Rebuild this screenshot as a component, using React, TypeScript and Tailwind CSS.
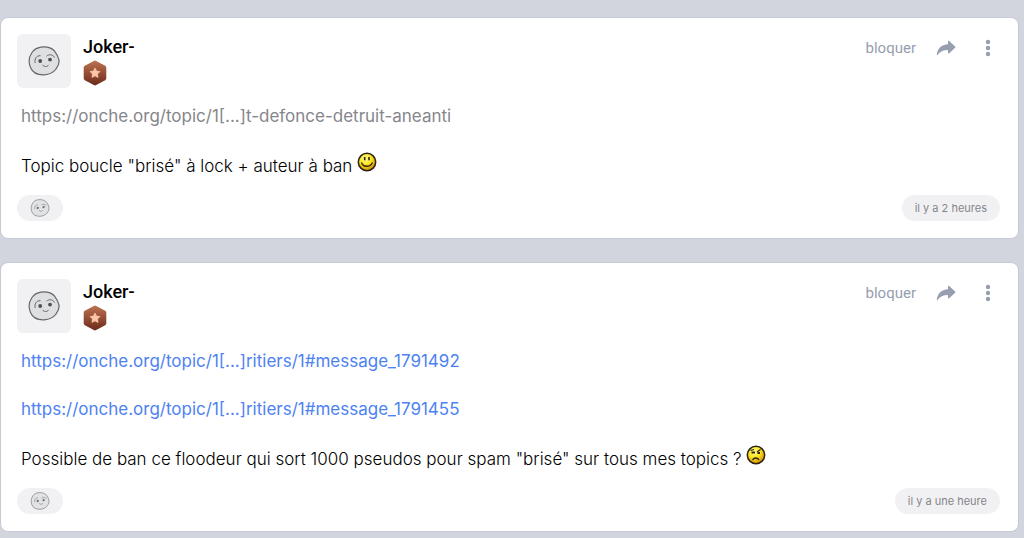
import type { ReactNode } from "react";

const Face = ({ className }: { className?: string }) => (
  <svg viewBox="0 0 32 30" className={className} fill="none" aria-hidden="true">
    <path
      d="M13 1.200C18 .5 23 1.500 26.500 5c1.500 2 3.500 4.500 4.300 8.500.8 3.500-.3 6.500-2.800 9.500-2.500 3.500-7 5.600-12 5.800C9.500 29 4.500 26.500 2.500 21.500.6 17 .8 11 4 6.500 6.200 3.300 9 1.800 13 1.200Z"
      fill="#dedfe0"
      stroke="#66676a"
      strokeWidth="1.200"
    />
    <path d="M7.200 17c-.9-4 1-7.500 5.300-7.300M18.500 10.200c2.300-2 6-2.200 8 1.300" stroke="#66676a" strokeWidth="1" />
    <path d="M14.500 18.800c1.800 2.300 4.500 2.300 6.300 0" stroke="#66676a" strokeWidth="1" />
    <circle cx="12.200" cy="15" r="1.900" fill="#4d4e51" />
    <circle cx="22" cy="13.600" r="1.900" fill="#4d4e51" />
  </svg>
);

const Medal = () => (
  <svg viewBox="0 0 24 26" className="h-[26px] w-6" role="img" aria-label="Bronze">
    <defs>
      <linearGradient id="bronze" x1="0" y1="0" x2="0" y2="1">
        <stop offset="0" stopColor="#bd7350" />
        <stop offset="1" stopColor="#6b2a1b" />
      </linearGradient>
    </defs>
    <path
      d="M10.800.9a2.400 2.400 0 0 1 2.400 0l9 4.900a2.200 2.200 0 0 1 1.100 1.900v10.600a2.200 2.200 0 0 1-1.100 1.900l-9 4.900a2.400 2.400 0 0 1-2.400 0l-9-4.900a2.200 2.200 0 0 1-1.100-1.900V7.700a2.200 2.200 0 0 1 1.100-1.900Z"
      fill="url(#bronze)"
    />
    <path
      d="m12 8 1.500 3.100 3.400.5-2.400 2.400.5 3.400-3-1.600-3 1.600.5-3.400-2.400-2.400 3.400-.5Z"
      fill="#fdc5a6"
      stroke="#fdc5a6"
      strokeWidth="0.800"
      strokeLinejoin="round"
    />
  </svg>
);

const Smiley = ({ sad = false }: { sad?: boolean }) => (
  <svg
    viewBox="0 0 20 20"
    className="inline-block size-5 align-baseline"
    role="img"
    aria-label={sad ? "Doute" : "Sourire"}
  >
    <defs>
      <radialGradient id="smiley" cx="0.4" cy="0.3" r="0.7">
        <stop offset="0" stopColor="#fffa8c" />
        <stop offset="0.500" stopColor="#fbe51e" />
        <stop offset="1" stopColor="#d78c0c" />
      </radialGradient>
    </defs>
    <circle cx="10" cy="10" r="8.700" fill="url(#smiley)" stroke="#2b2412" strokeWidth="1.500" />
    {sad ? (
      <g fill="none" stroke="#2b2412" strokeWidth="1.300">
        <path d="M4.500 5.500 8 4.500M11 7 14.500 4.500" />
        <path d="M6.500 15c1.500-2.700 5-2.700 6.500 0" />
        <path d="M5.500 7.500h3.500M11.500 8h2.500" strokeWidth="2" />
      </g>
    ) : (
      <g fill="none" stroke="#2b2412" strokeWidth="1.300">
        <path d="M4.500 10.500c1.500 5 9 5 11 0" />
        <path d="M7.700 5v3.200M12 5v3.200" strokeWidth="1.600" />
      </g>
    )}
  </svg>
);

const ShareIcon = () => (
  <svg viewBox="0 0 20 16" className="h-4 w-5" fill="#979eb0" aria-hidden="true">
    <path d="M12 1.500c0-.8.7-1 1.200-.5l5.900 5.500c.5.400.5.900 0 1.300l-5.900 5.400c-.5.500-1.200.3-1.200-.5V10C7 10 4 11.500 1.500 14.900c-.3.400-.8.300-.7-.3C1.500 8.500 5.500 4.500 12 4.200Z" />
  </svg>
);

const MenuIcon = () => (
  <svg viewBox="0 0 6 18" className="h-[18px] w-1.5" fill="#979eb0" aria-hidden="true">
    <circle cx="3" cy="3" r="2.200" />
    <circle cx="3" cy="9" r="2.200" />
    <circle cx="3" cy="15" r="2.200" />
  </svg>
);

const Message = ({ time, children }: { time: string; children: ReactNode }) => (
  <article className="rounded-lg border border-[#c6cad6] bg-white px-4 pt-4 pb-[17px]">
    <header className="flex items-start">
      <div className="flex size-[54px] items-center justify-center rounded-md bg-[#f1f1f3]">
        <Face className="h-[30px] w-8" />
      </div>
      <div className="ml-3 flex-1">
        <h2 className="font-[Roboto,sans-serif] text-lg leading-[26px] font-medium text-black">Joker-</h2>
        <Medal />
      </div>
      <div className="flex h-7 items-center font-[Roboto,sans-serif] text-[15px] text-[#979eb0]">
        <button type="button">bloquer</button>
        <button type="button" className="ml-5" aria-label="Partager">
          <ShareIcon />
        </button>
        <button type="button" className="mr-[11px] ml-[29px]" aria-label="Menu">
          <MenuIcon />
        </button>
      </div>
    </header>
    <div className="mt-4 flex flex-col gap-6 px-1 text-[17px] leading-6 font-light text-black">{children}</div>
    <footer className="mt-[17px] flex items-center justify-between pr-0.5">
      <div className="flex h-[26px] w-[46px] items-center justify-center rounded-full bg-[#f1f1f3]">
        <Face className="h-[18px] w-5 opacity-80" />
      </div>
      <time className="rounded-full bg-[#f1f1f3] px-[13px] text-[11px] leading-[26px] text-[#85868b]">{time}</time>
    </footer>
  </article>
);

export default function App() {
  return (
    <main className="flex min-h-screen flex-col gap-[23px] bg-[#d2d5de] pt-[17px] pr-[5px] pb-[7px] font-[Inter,sans-serif]">
      <Message time="il y a 2 heures">
        <p>
          <a href="#topic" className="font-normal text-[#85868b]">
            https://onche.org/topic/1[...]t-defonce-detruit-aneanti
          </a>
        </p>
        <p>
          Topic boucle "brisé" à lock + auteur à ban <Smiley />
        </p>
      </Message>
      <Message time="il y a une heure">
        <p>
          <a href="#message_1791492" className="font-normal text-[#4d82f3]">
            https://onche.org/topic/1[...]ritiers/1#message_1791492
          </a>
        </p>
        <p>
          <a href="#message_1791455" className="font-normal text-[#4d82f3]">
            https://onche.org/topic/1[...]ritiers/1#message_1791455
          </a>
        </p>
        <p>
          Possible de ban ce floodeur qui sort 1000 pseudos pour spam "brisé" sur tous mes topics ? <Smiley sad />
        </p>
      </Message>
    </main>
  );
}
